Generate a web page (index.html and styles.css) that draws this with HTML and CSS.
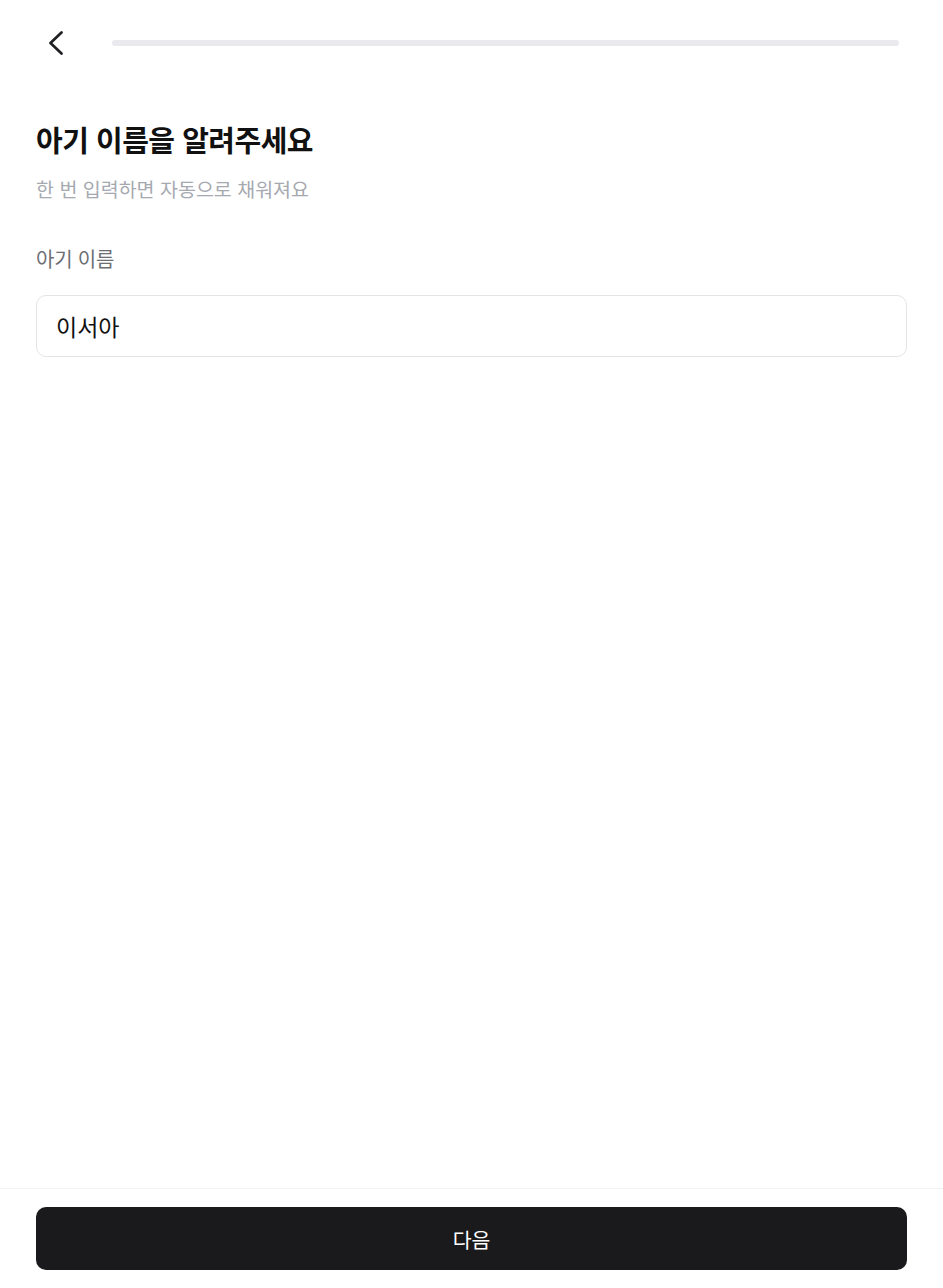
FILE: index.html
```html
<!DOCTYPE html>
<html lang="ko">
<head>
<meta charset="utf-8">
<title>아기 이름</title>
<link rel="stylesheet" href="styles.css">
</head>
<body>
<div class="page">
  <header class="topbar">
    <button class="back" aria-label="뒤로">
      <svg width="24" height="24" viewBox="0 0 24 24" fill="none"><path d="M17.5 1.5 L6.5 12 L17.5 22.5" stroke="#1f2024" stroke-width="2.7" stroke-linecap="round" stroke-linejoin="round"/></svg>
    </button>
    <div class="progress"><div class="progress-fill" style="width:0%"></div></div>
  </header>
  <main class="content">
    <h1 class="title">아기 이름을 알려주세요</h1>
    <p class="subtitle">한 번 입력하면 자동으로 채워져요</p>
    <label class="label" for="name">아기 이름</label>
    <div class="field"><input id="name" class="input" type="text" value="이서아"></div>
  </main>
  <footer class="footer">
    <button class="next">다음</button>
  </footer>
</div>
</body>
</html>
```
FILE: styles.css
```css
* { box-sizing: border-box; }
html, body { margin: 0; padding: 0; background: #fff; }
body { font-family: "Noto Sans CJK KR", "Noto Sans", sans-serif; color: #111; }
.page { min-height: 100vh; display: flex; flex-direction: column; }
.topbar { height: 86px; display: flex; align-items: center; padding: 0 44px; }
.back { width: 24px; height: 24px; padding: 0; border: 0; background: none; display: flex; align-items: center; justify-content: center; margin-right: 44px; }
.progress { flex: 1; height: 6px; border-radius: 3px; background: #e9e9ee; overflow: hidden; }
.progress-fill { height: 100%; background: #1a1a1c; }
.content { padding: 34px 36px 0; display: flex; flex-direction: column; }
.title { margin: 0; font-size: 29px; line-height: 39px; font-weight: 700; letter-spacing: -0.5px; color: #111; }
.subtitle { margin: 17px 0 0; font-size: 19.5px; line-height: 26px; font-weight: 400; letter-spacing: 0; color: #a6a9b0; }
.label { margin-top: 44px; font-size: 20px; line-height: 26px; letter-spacing: -0.2px; color: #6c6e74; }
.field { margin-top: 23px; }
.input { width: 100%; height: 62px; border: 1.5px solid #e4e4e7; border-radius: 10px; padding: 0 19px; font-family: inherit; font-size: 23px; color: #111; background: #fff; outline: none; }
.footer { margin-top: auto; border-top: 1px solid #f2f2f3; padding: 18px 36px 18px; }
.next { width: 100%; height: 63px; border: 0; border-radius: 10px; background: #1a1a1c; color: #fff; font-family: inherit; font-size: 20.5px; }
```
